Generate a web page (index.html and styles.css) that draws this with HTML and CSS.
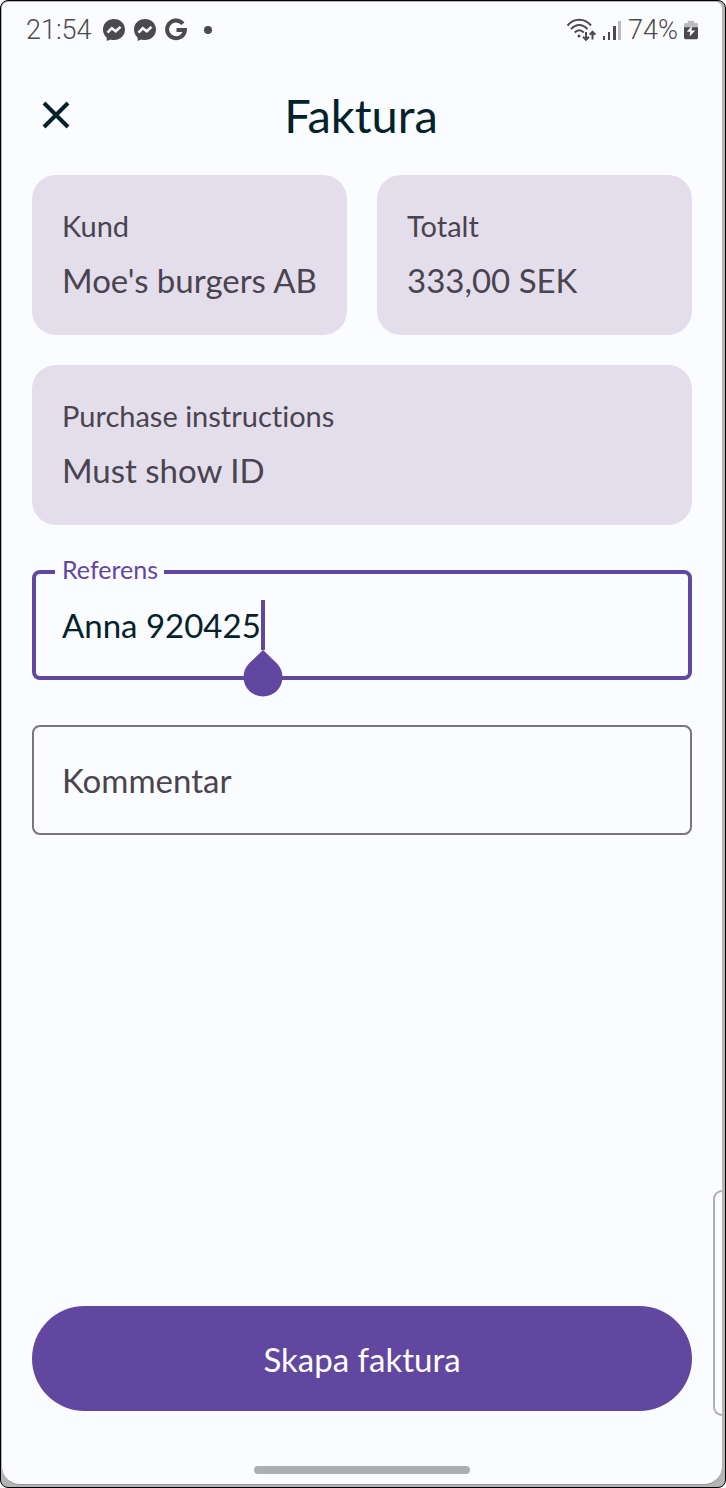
FILE: index.html
```html
<!DOCTYPE html>
<html lang="sv">
<head>
<meta charset="utf-8">
<meta name="viewport" content="width=device-width, initial-scale=1">
<title>Faktura</title>
<link rel="stylesheet" href="styles.css">
</head>
<body>
<div class="frame">
  <div class="screen">
    <div class="status">
      <div class="status-group">
        <span class="status-text">21:54</span>
        <svg class="status-icon" viewBox="0 0 24 24" aria-hidden="true"><path class="ink" d="M12 1C5.700 1 1 5.500 1 11.600c0 3.300 1.400 6.100 3.600 8l.2 3.400 3.300-1.500c1.200.4 2.500.6 3.900.6 6.300 0 11-4.500 11-10.500S18.300 1 12 1z"/><path class="bolt" d="M5.500 14.700l4.300-4.500 4 3 4.700-4.300"/></svg>
        <svg class="status-icon" viewBox="0 0 24 24" aria-hidden="true"><path class="ink" d="M12 1C5.700 1 1 5.500 1 11.600c0 3.300 1.400 6.100 3.600 8l.2 3.400 3.300-1.500c1.200.4 2.500.6 3.900.6 6.300 0 11-4.500 11-10.500S18.300 1 12 1z"/><path class="bolt" d="M5.500 14.700l4.300-4.500 4 3 4.700-4.300"/></svg>
        <svg class="status-icon" viewBox="0 0 24 24" aria-hidden="true"><path class="google" d="M18.900 5.700A8.900 8.900 0 1 0 20.900 12H12.500"/></svg>
        <span class="dot"></span>
      </div>
      <div class="status-group status-right">
        <svg class="wifi" viewBox="0 0 30 24" aria-hidden="true"><g class="line"><path d="M1.500 7.500C8-.2 18.500-.2 25 7.500M5 11.200c4.800-5.600 11.700-5.600 16.500 0M8.700 14.500c2.800-3 6.300-3 9 0"/><path d="M20 14v7.500M17 18.800l3 3 3-3M26.500 21.500v-7.500M23.700 16.700l2.800-2.900 2.800 2.900"/></g><circle class="ink" cx="13" cy="18" r="1.500"/></svg>
        <svg class="signal" viewBox="0 0 20 22" aria-hidden="true"><path class="ink" d="M1 17h2v4H1zM6 13h2v8H6zM11 7h3v14h-3z"/><path class="faint" d="M16 2h3v19h-3z"/></svg>
        <span class="status-text">74%</span>
        <svg class="battery" viewBox="0 0 15 22" aria-hidden="true"><path class="faint" d="M0 9V5q0-1.500 1.500-1.500H4V2q0-1 1-1h5q1 0 1 1v1.500h2.500Q15 3.500 15 5v4z"/><path class="ink" d="M0 8h15v11q0 2-2 2H2q-2 0-2-2z"/><path class="flash" d="M8.500 6.500L3 13h3.700L6 18l6-6.500H8z"/></svg>
      </div>
    </div>

    <header class="header">
      <button class="close" type="button" aria-label="Stäng"><svg viewBox="0 0 28 28" aria-hidden="true"><path d="M2 2l24 24M26 2L2 26"/></svg></button>
      <h1 class="title">Faktura</h1>
    </header>

    <main class="content">
      <dl class="cards">
        <div class="card"><dt>Kund</dt><dd>Moe's burgers AB</dd></div>
        <div class="card"><dt>Totalt</dt><dd>333,00 SEK</dd></div>
        <div class="card card-wide"><dt>Purchase instructions</dt><dd>Must show ID</dd></div>
      </dl>
      <form class="form" id="invoice">
        <div class="field field-active">
          <label class="field-label" for="reference">Referens</label>
          <input class="field-input field-fit" id="reference" type="text" value="Anna 920425">
          <span class="caret"><svg class="handle" viewBox="0 0 40 46" aria-hidden="true"><path d="M20 0L34 13.500A19.500 19.500 0 1 1 6 13.500z"/></svg></span>
        </div>
        <div class="field">
          <input class="field-input" id="comment" type="text" placeholder="Kommentar" aria-label="Kommentar">
        </div>
      </form>
    </main>

    <footer class="footer">
      <button class="submit" type="submit" form="invoice">Skapa faktura</button>
      <span class="home"></span>
    </footer>
    <span class="edge-panel"></span>
  </div>
</div>
</body>
</html>
```
FILE: styles.css
```css
* {
  box-sizing: border-box;
}

:root {
  --purple: #6247a0;
  --surface: #fbfcff;
  --ink: #04222a;
  --muted: #49444f;
  --status: #4b4b4d;
}

body {
  margin: 0;
  background: #fff;
  font-family: Lato, sans-serif;
  font-size: 33px;
  font-variant-ligatures: none;
  color: var(--ink);
}

.frame {
  display: flex;
  min-height: 100vh;
  padding: 1px 3px 2px 1px;
  border: 1px solid #000;
  border-radius: 8px;
  background: #b4b4b4;
}

.screen {
  position: relative;
  flex: 1;
  min-width: 0;
  display: flex;
  flex-direction: column;
  overflow: hidden;
  border-radius: 6px 6px 18px 18px;
  border-bottom: 1px solid #949494;
  background: var(--surface);
}

.status {
  display: flex;
  justify-content: space-between;
  align-items: center;
  height: 56px;
  padding: 0 24px;
  color: var(--status);
}

.status-group {
  display: flex;
  align-items: center;
  gap: 7px;
}

.status-right {
  gap: 6px;
}

.status-text {
  font-family: Roboto, sans-serif;
  font-size: 27px;
  font-weight: 300;
  line-height: 32px;
}

.status-group:first-child .status-text {
  margin-right: 3px;
}

.status-icon {
  width: 24px;
  height: 24px;
}

.ink {
  fill: var(--status);
}

.faint {
  fill: #bcbcbe;
}

.flash {
  fill: #fff;
}

.bolt {
  fill: none;
  stroke: #fff;
  stroke-width: 2.6;
}

.google {
  fill: none;
  stroke: var(--status);
  stroke-width: 4;
}

.dot {
  width: 8px;
  height: 8px;
  margin-left: 9px;
  border-radius: 50%;
  background: var(--status);
}

.wifi {
  width: 30px;
  height: 24px;
}

.line {
  fill: none;
  stroke: var(--status);
  stroke-width: 2;
}

.signal {
  width: 20px;
  height: 22px;
}

.battery {
  width: 14px;
  height: 22px;
}

.header {
  display: grid;
  grid-template-columns: 48px 1fr 50px;
  align-items: center;
  height: 117px;
  padding: 0 30px 4px;
}

.close {
  display: grid;
  place-items: center;
  height: 48px;
  padding: 0;
  border: 0;
  background: none;
}

.close svg {
  width: 28px;
  height: 28px;
  fill: none;
  stroke: var(--ink);
  stroke-width: 4;
}

.title {
  margin: 0;
  font-size: 47px;
  font-weight: 400;
  line-height: 56px;
  text-align: center;
}

.content {
  flex: 1;
  padding: 0 30px;
}

.cards {
  display: grid;
  grid-template-columns: 1fr 1fr;
  gap: 30px;
  margin: 0 0 45px;
}

.card {
  padding: 23px 30px 27px;
  border-radius: 24px;
  background: #e4deec;
  color: var(--muted);
  line-height: 55px;
}

.card-wide {
  grid-column: 1 / -1;
}

.card dt {
  font-size: 29px;
}

.card dd {
  margin: 0;
}

.form {
  display: grid;
  gap: 45px;
}

.field {
  position: relative;
  display: flex;
  align-items: center;
  height: 110px;
  padding: 0 28px;
  border: 2px solid #78757d;
  border-radius: 8px;
}

.field-active {
  padding: 0 26px;
  border: 4px solid var(--purple);
}

.field-label {
  position: absolute;
  top: -21px;
  left: 19px;
  padding: 0 6px 0 7px;
  background: var(--surface);
  color: var(--purple);
  font-size: 25px;
  line-height: 32px;
}

.field-input {
  flex: 1;
  min-width: 0;
  height: 50px;
  padding: 0;
  border: 0;
  outline: 0;
  background: none;
  color: var(--ink);
  font: inherit;
}

.field-fit {
  flex: none;
  field-sizing: content;
}

.field-input::placeholder {
  color: var(--muted);
  opacity: 1;
}

.caret {
  position: relative;
  width: 4px;
  height: 50px;
  background: var(--purple);
}

.handle {
  position: absolute;
  top: 100%;
  left: -18px;
  width: 40px;
  height: 46px;
  overflow: visible;
  fill: var(--purple);
}

.footer {
  display: grid;
  justify-items: center;
  gap: 55px;
  padding: 0 30px 10px;
}

.submit {
  width: 100%;
  height: 105px;
  border: 0;
  border-radius: 53px;
  background: var(--purple);
  color: #fff;
  font: inherit;
}

.home {
  width: 216px;
  height: 8px;
  border-radius: 4px;
  background: #adaeb0;
}

.edge-panel {
  position: absolute;
  right: 0;
  bottom: 68px;
  width: 9px;
  height: 226px;
  border: 2px solid #b0b0b2;
  border-right: 0;
  border-radius: 9px 0 0 9px;
}
```
